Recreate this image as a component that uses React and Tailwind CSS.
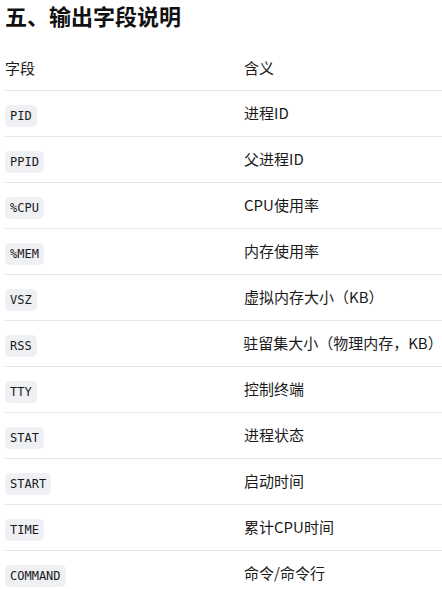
import React from "react";

const rows = [
  ["PID", "进程ID"],
  ["PPID", "父进程ID"],
  ["%CPU", "CPU使用率"],
  ["%MEM", "内存使用率"],
  ["VSZ", "虚拟内存大小（KB）"],
  ["RSS", "驻留集大小（物理内存，KB）"],
  ["TTY", "控制终端"],
  ["STAT", "进程状态"],
  ["START", "启动时间"],
  ["TIME", "累计CPU时间"],
  ["COMMAND", "命令/命令行"],
];

export default function App() {
  return (
    <div
      className="bg-white pl-[5px] text-[#1a1a1a] w-[442px] h-[589px] overflow-hidden"
      style={{ fontFamily: '"Noto Sans CJK SC", "Inter", sans-serif' }}
    >
      <h3 className="text-[22px] font-bold leading-[30px] m-0 text-[#111]">五、输出字段说明</h3>
      <div className="mt-[17px]">
        <div className="flex h-[44px] items-center border-b border-[#e5e5e5] text-[15px]">
          <div className="w-[239px]">字段</div>
          <div>含义</div>
        </div>
        {rows.map(([k, v]) => (
          <div key={k} className="flex h-[46px] items-center border-b border-[#e5e5e5] text-[15px]">
            <div className="w-[239px] pt-[2px]">
              <span
                className="inline-block bg-[#eef0f3] rounded-[5px] px-[5px] h-[22px] leading-[22px] text-[12px]"
                style={{ fontFamily: '"DejaVu Sans Mono", monospace' }}
              >
                {k}
              </span>
            </div>
            <div>{v}</div>
          </div>
        ))}
      </div>
    </div>
  );
}
